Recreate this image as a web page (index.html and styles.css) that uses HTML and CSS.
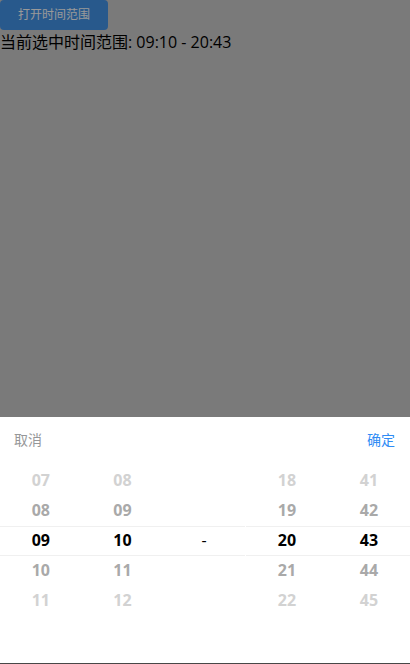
FILE: index.html
```html
<!DOCTYPE html>
<html lang="zh-CN">
<head>
<meta charset="utf-8">
<title>时间范围</title>
<link rel="stylesheet" href="styles.css">
</head>
<body>
<button class="open-btn">打开时间范围</button>
<p class="current">当前选中时间范围: 09:10 - 20:43</p>

<div class="mask"></div>
<div class="popup">
  <div class="toolbar">
    <span class="cancel">取消</span>
    <span class="confirm">确定</span>
  </div>
  <div class="columns">
    <div class="group group-left">
      <div class="indicator"></div>
      <div class="col">
        <div class="item far">07</div>
        <div class="item near">08</div>
        <div class="item sel">09</div>
        <div class="item near">10</div>
        <div class="item far">11</div>
      </div>
      <div class="col">
        <div class="item far">08</div>
        <div class="item near">09</div>
        <div class="item sel">10</div>
        <div class="item near">11</div>
        <div class="item far">12</div>
      </div>
      <div class="col">
        <div class="item"></div>
        <div class="item"></div>
        <div class="item dash">-</div>
        <div class="item"></div>
        <div class="item"></div>
      </div>
    </div>
    <div class="group group-right">
      <div class="indicator"></div>
      <div class="col">
        <div class="item far">18</div>
        <div class="item near">19</div>
        <div class="item sel">20</div>
        <div class="item near">21</div>
        <div class="item far">22</div>
      </div>
      <div class="col">
        <div class="item far">41</div>
        <div class="item near">42</div>
        <div class="item sel">43</div>
        <div class="item near">44</div>
        <div class="item far">45</div>
      </div>
    </div>
  </div>
</div>
</body>
</html>
```

FILE: styles.css
```css
* { box-sizing: border-box; }

html, body {
  margin: 0;
  padding: 0;
}

body {
  width: 410px;
  height: 664px;
  background: #cbcbcb;
  font-family: "Open Sans", "Noto Sans CJK SC", sans-serif;
  color: #000;
  overflow: hidden;
}

.open-btn {
  display: block;
  width: 108px;
  height: 30px;
  margin: 0;
  padding: 0;
  border: none;
  border-radius: 4px;
  background: #4394ea;
  color: #fff;
  font-family: inherit;
  font-size: 12px;
  line-height: 30px;
}

.current {
  margin: 0;
  font-size: 16px;
  line-height: 22px;
  padding-top: 1px;
}

.mask {
  position: fixed;
  inset: 0;
  background: rgba(0, 0, 0, 0.4);
}

.popup {
  position: fixed;
  left: 0;
  right: 0;
  bottom: 0;
  height: 247px;
  background: #fff;
  border-bottom: 1px solid #474747;
}

.toolbar {
  height: 44px;
  display: flex;
  align-items: center;
  justify-content: space-between;
  padding: 0 15px 0 14px;
  font-size: 14px;
}

.cancel { color: #969799; }
.confirm { color: #2f8cf5; }

.columns {
  display: flex;
  gap: 1px;
  padding-top: 5px;
}

.group {
  position: relative;
  display: flex;
}

.group-left { width: 245px; }
.group-right { width: 164px; }

.indicator {
  position: absolute;
  left: 0;
  right: 0;
  top: 60px;
  height: 30px;
  border-top: 1px solid #f0f0f0;
  border-bottom: 1px solid #f0f0f0;
  pointer-events: none;
}

.col {
  flex: 1;
  display: flex;
  flex-direction: column;
}

.item {
  height: 30px;
  line-height: 29px;
  padding-bottom: 1px;
  text-align: center;
  font-size: 16px;
  font-weight: 700;
}

.item.sel { color: #000; }
.item.near { color: #a9a9a9; }
.item.far { color: #d2d2d2; }
.item.dash { font-weight: 400; color: #000; }
```
